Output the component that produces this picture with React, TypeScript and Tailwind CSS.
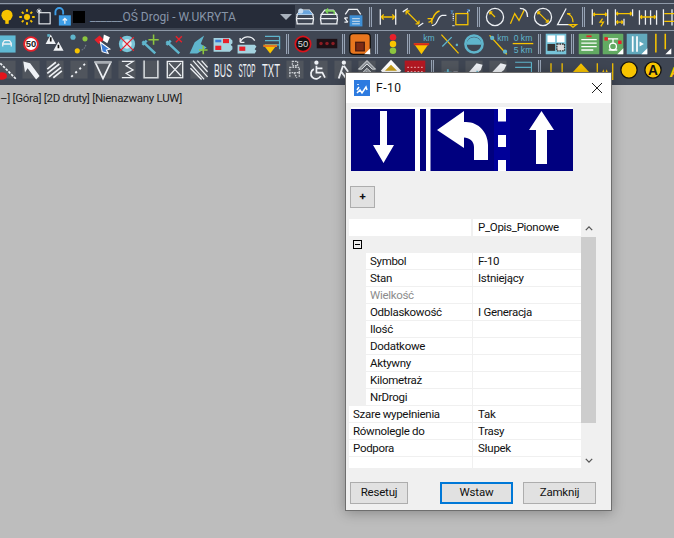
import type { ReactNode } from "react";

const Y = "#f8c400";
const W = "#eef1f5";
const T = "#5fb5cc";
const R = "#e8202a";
const G = "#8cc63f";

const Ico = ({ children, tile }: { children: ReactNode; tile?: boolean }) => (
  <svg viewBox="-2 -2 28 28" width="24" height="24" fill="none" strokeWidth="1.5" className="shrink-0">
    {tile && <rect x="2" y="1" width="20" height="21" fill="#50555d" />}
    {children}
  </svg>
);

const Sep = ({ className = "w-2" }: { className?: string }) => (
  <div className={`flex h-full shrink-0 items-center justify-center ${className}`}>
    <div className="h-[20px] w-[3px] border-x border-[#97a3b5] bg-[#4b5361]" />
  </div>
);

const Layers = ({ children }: { children?: ReactNode }) => (
  <Ico>
    <path d="M3 9 7 4h10l4 5zM2 14h20M3 9l-1 5M21 9l1 5M2 20h20M2 14l1 6M22 14l-1 6" stroke={W} />
    {children}
  </Ico>
);

const DimH = ({ children }: { children?: ReactNode }) => (
  <Ico>
    <path d="M3 3v18M21 3v18" stroke={W} />
    {children}
  </Ico>
);

const Card = ({ children }: { children?: ReactNode }) => (
  <Ico>
    <path d="M1 5h19l3 3v3l-2 2 2 2v3l-3 3H1z" fill="#a5d3e0" />
    {children}
  </Ico>
);

const GlyphWord = ({ t, sx }: { t: string; sx: number }) => (
  <svg viewBox="0 0 24 24" width="24" height="24" className="shrink-0">
    <text
      transform={`translate(12 19) scale(${sx} 1)`}
      textAnchor="middle"
      fill={W}
      fontSize="19"
      fontFamily="Liberation Sans, sans-serif"
    >
      {t}
    </text>
  </svg>
);

const row1Left = (
  <>
    <div className="-ml-[5px] flex w-[20px] shrink-0">
      <Ico>
        <circle cx="12" cy="10" r="6.500" fill={Y} />
        <rect x="10" y="15" width="4" height="5" fill={Y} />
      </Ico>
    </div>
    <div className="w-[18px] shrink-0">
      <Ico>
        <circle cx="12" cy="12" r="3.500" fill={Y} />
        <path d="M12 3v3M12 18v3M3 12h3M18 12h3M6 6l2 2M16 16l2 2M18 6l-2 2M8 16l-2 2" stroke={Y} strokeWidth="2.200" />
      </Ico>
    </div>
    <div className="w-[19px] shrink-0">
      <Ico>
        <rect x="5" y="7" width="13" height="13" stroke={W} strokeWidth="1.300" />
        <path d="M3 3l4 4M7 3 3 7M5 2v6M2 5h6" stroke={W} strokeWidth="1" />
      </Ico>
    </div>
    <div className="w-[18px] shrink-0">
      <Ico>
        <path d="M2 10V6a4.500 4.500 0 0 1 9 0v3" stroke="#3d9de6" strokeWidth="2.200" />
        <rect x="6" y="10" width="14" height="12" fill="#3d9de6" />
        <path d="M13 20v-6M10.500 16l2.500-2.500 2.500 2.500" stroke={W} strokeWidth="1.500" />
      </Ico>
    </div>
    <div className="ml-[3px] h-[12px] w-[12px] shrink-0 bg-black" />
  </>
);

const Row1 = () => (
  <div className="flex h-[26px] items-center pb-px">
    <div className="flex h-[23px] w-[295px] shrink-0 items-center bg-[#262c39]">
      {row1Left}
      <span className="ml-[5px] flex-1 text-[12px] leading-none text-[#8695a8]">______OŚ Drogi - W.UKRYTA</span>
      <div className="mr-[3px] h-0 w-0 border-x-[6px] border-t-[6px] border-x-transparent border-t-[#a9b2bd]" />
    </div>
    <div className="ml-[-2px] flex items-center">
      <Layers>
        <path d="M3 9 7 4h10l4 5z" fill="#6aa5dd" />
        <circle cx="7" cy="5" r="3" fill="#c8dcf0" />
      </Layers>
      <Layers>
        <path d="M8 5h10v4M8 5l3-3M8 5l3 3" stroke="#7ed957" strokeWidth="1.500" />
      </Layers>
      <Ico>
        <path d="M3 9 7 3h10l4 6M2 13h4M2 18h4M2 13l4 5" stroke={W} />
        <rect x="8" y="10" width="15" height="13" fill="#3e8fd6" />
        <path d="M11 14h9M11 17h9M11 20h9" stroke={W} strokeWidth="1" />
      </Ico>
      <Sep className="w-[11px]" />
      <DimH>
        <path d="M4 12h16M4 12l3-3M4 12l3 3M20 12l-3-3M20 12l-3 3" stroke={Y} />
      </DimH>
      <div className="ml-px">
        <Ico>
          <path d="M0 6l6-4M18 23l6-4" stroke={W} />
          <path d="M4 5l15 15M4 5h4M4 5v4M19 20h-4M19 20v-4" stroke={Y} />
        </Ico>
      </div>
      <Ico>
        <path d="M2 18c7 0 4-11 13-13" stroke={Y} strokeWidth="1.600" />
        <path d="M6 22c8 0 5-10 12-12h5" stroke={W} />
        <path d="M1 14h5v6" stroke={Y} />
      </Ico>
      <Ico>
        <rect x="6" y="8" width="14" height="13" stroke={Y} />
        <path d="M3 8v8M2 22h3M22 4l-3 3" stroke={W} strokeDasharray="1.500 1" />
        <text x="0" y="7" fontSize="7" fill="#5aa7e0">y</text>
        <text x="19" y="6" fontSize="7" fill="#5aa7e0">x</text>
      </Ico>
      <Sep className="w-[10px]" />
      <Ico>
        <circle cx="12" cy="12" r="10" stroke={W} />
        <path d="M12 12 6 6M6 6h3M6 6v3" stroke={Y} />
      </Ico>
      <Ico>
        <path d="M2 20 7 8l5 8 6-12" stroke={Y} />
        <path d="M13 2c6 0 9 4 9 10" stroke={W} />
      </Ico>
      <Ico>
        <circle cx="12" cy="12" r="10" stroke={W} />
        <path d="M6 6l12 12M6 6h3M6 6v3M18 18h-3M18 18v-3" stroke={Y} />
      </Ico>
      <Ico>
        <path d="M11 2 1 21h15" stroke={W} />
        <path d="M12 8c5 1 7 6 7 10M15 21h8l-4 3zM12 8h4" stroke={Y} />
      </Ico>
      <Sep className="w-[9px]" />
      <DimH>
        <path d="M4 9h16M4 9l2-2M4 9l2 2M20 9l-2-2M20 9l-2 2M15 14l-3 4h4l-3 5" stroke={Y} />
      </DimH>
      <Ico>
        <path d="M2 3v19M22 3v8M12 14v8" stroke={W} />
        <path d="M3 8h18M3 8l2-2M21 8l-2-2M3 8l2 2M21 8l-2 2M3 18h8M3 18l2-2M3 18l2 2M11 18l-2-2M11 18l-2 2" stroke={Y} />
      </Ico>
      <Ico>
        <path d="M2 4v17M9 4v17M15 4v17M22 4v17" stroke={W} />
        <path d="M3 12h18M3 12l2-2M3 12l2 2M21 12l-2-2M21 12l-2 2" stroke={Y} />
      </Ico>
      <Ico>
        <path d="M2 3v19M12 3v19" stroke={W} />
        <path d="M3 8h18M3 17h18" stroke={Y} />
      </Ico>
    </div>
  </div>
);

const Row2 = () => (
  <div className="-ml-[5px] flex h-[26px] items-center pb-px">
    <Ico>
      <rect x="2" y="2" width="20" height="20" fill="#5fb9d4" />
      <path d="M7 15v-4l2-3h6l2 3v4M7 12h10" stroke={W} />
    </Ico>
    <Ico>
      <circle cx="12" cy="12" r="8" fill="#fff" stroke={R} strokeWidth="2.200" />
      <text x="12" y="16" textAnchor="middle" fontSize="11" fontWeight="700" fill="#222" fontFamily="Liberation Sans, sans-serif">50</text>
    </Ico>
    <Ico>
      <path d="M7 1l6 11H1zM16 9l6 11H10z" fill={W} />
      <path d="M7 4v5M16 13v4" stroke="#111" strokeWidth="2" />
      <path d="M3 2h3" stroke={T} strokeWidth="3" />
    </Ico>
    <Ico>
      <circle cx="5" cy="4" r="3" fill={T} />
      <circle cx="19" cy="6" r="3" fill={G} />
      <circle cx="10" cy="20" r="3" fill={Y} />
      <path d="M15 19c3-1 5-4 5-7" stroke="#6b7480" strokeDasharray="2 1" />
    </Ico>
    <Ico>
      <path d="M2 7l6-5 5 5-6 5z" fill={R} />
      <path d="M13 1l7 3-3 7-5-3z" fill="#fff" />
      <path d="M9 10l11 8-4 1 2 4-7-2z" fill="#3a7bd5" stroke="#fff" strokeWidth="1.200" />
    </Ico>
    <Ico>
      <circle cx="12" cy="12" r="9.500" fill="#79c5d8" />
      <circle cx="12" cy="12" r="5.500" fill="#d7edf3" />
      <path d="M4 4l16 16M20 4 4 20" stroke={R} strokeWidth="1.500" />
    </Ico>
    <Ico>
      <path d="M2 9l15 14M2 13l5-5" stroke={T} strokeWidth="3" />
      <path d="M15 1v12M9 7h12" stroke={G} strokeWidth="1.800" />
    </Ico>
    <Ico>
      <path d="M2 9l15 14M2 13l5-5" stroke={T} strokeWidth="3" />
      <path d="M13 3l7 7M20 3l-7 7" stroke={R} strokeWidth="1.600" />
    </Ico>
    <Ico>
      <path d="M1 23 7 10l11-8-4 10 7 4-11 7z" fill={T} />
      <path d="M17 14v10M12 19h10" stroke={G} strokeWidth="1.800" />
    </Ico>
    <Card>
      <rect x="3" y="7" width="7" height="3" fill="#3a7bd5" />
      <rect x="12" y="6" width="7" height="5" fill={R} />
      <rect x="3" y="14" width="7" height="5" fill={R} />
    </Card>
    <Ico>
      <path d="M1 13h20l2 2-2 3 2 2-2 3H1z" fill="#a5d3e0" />
      <path d="M4 10c3-8 13-8 17-2M4 10V5M4 10h5" stroke={W} />
      <rect x="3" y="15" width="7" height="5" fill={R} />
    </Ico>
    <Ico>
      <path d="M5 3h17M5 8h17M5 13h17M22 3v15" stroke={T} />
      <path d="M3 13h16l-8 10z" fill={Y} />
      <path d="M3 13h16v2.500H3z" fill="#e57a1f" />
    </Ico>
    <Sep className="w-[8px]" />
    <Ico>
      <circle cx="12" cy="12" r="9" fill="#111" stroke="#d8141c" strokeWidth="2" />
      <text x="12" y="16" textAnchor="middle" fontSize="11" fill="#ddd" fontFamily="Liberation Sans, sans-serif">50</text>
    </Ico>
    <Ico>
      <rect x="0" y="6" width="24" height="11" fill="#1d1015" />
      <circle cx="5" cy="11.500" r="2" fill="#8a1d24" />
      <circle cx="12" cy="11.500" r="2" fill="#8a1d24" />
      <circle cx="19" cy="11.500" r="2" fill="#8a1d24" />
    </Ico>
    <Sep className="w-[9px]" />
    <Ico>
      <rect x="0" y="0" width="24" height="24" rx="4" fill="#e8761e" stroke="#111" />
      <rect x="7" y="10" width="10" height="10" fill="#7d2b14" stroke="#4a1a10" />
      <path d="M24 17v7h-7z" fill="#fff" />
    </Ico>
    <Sep className="w-[9px]" />
    <Ico>
      <circle cx="12" cy="4" r="3.800" fill={R} />
      <circle cx="12" cy="12" r="3.800" fill={Y} />
      <circle cx="12" cy="20" r="3.800" fill={G} />
    </Ico>
    <Sep className="w-[7px]" />
    <Ico>
      <path d="M0 11h18l-9 13z" fill={Y} />
      <path d="M0 11h18v2.500H0z" fill="#d5281c" />
      <text x="11" y="8" fontSize="10" fill={T} fontFamily="Liberation Sans, sans-serif">km</text>
    </Ico>
    <div className="ml-[2px]">
      <Ico>
        <path d="M2 1l20 22" stroke={Y} />
        <path d="M3 15 14 4M19 12l2 2M21 12l-2 2" stroke={T} />
      </Ico>
    </div>
    <Ico>
      <circle cx="12" cy="12" r="10" stroke={T} strokeWidth="3" />
      <path d="M3 13a9 9 0 0 1 18 0z" fill={T} />
    </Ico>
    <div className="ml-px">
      <Ico>
        <path d="M1 2l20 22" stroke={Y} />
        <circle cx="4" cy="5" r="2.500" fill={T} />
        <circle cx="19" cy="21" r="2.500" fill={T} />
        <text x="10" y="9" fontSize="10" fill={T} fontFamily="Liberation Sans, sans-serif">km</text>
      </Ico>
    </div>
    <Ico>
      <text x="12" y="8" textAnchor="middle" fontSize="10" fill={T} fontFamily="Liberation Sans, sans-serif">0 km</text>
      <path d="M0 11.500h24" stroke={Y} />
      <text x="12" y="22" textAnchor="middle" fontSize="10" fill={T} fontFamily="Liberation Sans, sans-serif">5 km</text>
    </Ico>
    <Sep className="w-[9px]" />
    <Ico>
      <rect x="0" y="0" width="24" height="24" fill="#77c3d8" />
      <rect x="2" y="2" width="9" height="8" fill="#fff" />
      <rect x="13" y="2" width="9" height="8" fill="#fff" />
      <rect x="2" y="12" width="9" height="8" fill="#333" />
      <path d="M13 12h9v8h-9z" fill="#ddd" stroke="#333" strokeDasharray="2 1" />
    </Ico>
    <Sep className="w-[9px]" />
    <Ico>
      <rect x="0" y="0" width="24" height="24" rx="1" fill="#62aa62" />
      <path d="M3 7h18M3 11h18M3 15h18M3 19h14" stroke="#fff" />
      <path d="M9 3h6" stroke={R} strokeWidth="2" />
    </Ico>
    <Ico>
      <rect x="0" y="0" width="24" height="24" rx="1" fill="#62aa62" />
      <path d="M6 6h12M12 6v6M7 19h10" stroke="#fff" />
      <circle cx="12" cy="15" r="4" stroke="#fff" />
      <rect x="2" y="4" width="4" height="4" fill={R} />
      <rect x="18" y="8" width="4" height="4" fill={R} />
      <path d="M24 17v7h-7z" fill="#fff" />
    </Ico>
    <Ico>
      <rect x="0" y="0" width="24" height="24" fill="#62a9bd" />
      <path d="M7 3v18M12 3v18" stroke="#fff" strokeWidth="2" />
      <path d="M15 9l5 3-5 3z" fill="#fff" />
      <path d="M24 17v7h-7z" fill="#fff" />
    </Ico>
    <Ico>
      <path d="M6 0v22M17 0v18" stroke={Y} strokeWidth="1.800" />
      <path d="M24 17v7h-7z" fill="#fff" />
    </Ico>
  </div>
);

const Row3 = () => (
  <div className="-ml-[5px] flex h-[27px] items-center pb-[3px]">
    <Ico tile>
      <path d="M1 1l22 22" stroke={W} strokeWidth="2" strokeDasharray="3 1.500" />
      <ellipse cx="6" cy="19" rx="6" ry="4.500" fill="#e4141c" />
    </Ico>
    <Ico tile>
      <path d="M3 2l8 2 11 15-4 4-10-13-3 5z" fill={W} />
    </Ico>
    <Ico tile>
      <path d="M3 11l10-8M3 16l14-11M5 20l14-11M10 21l10-8" stroke={W} strokeWidth="2" />
    </Ico>
    <Ico tile>
      <path d="M3 20 21 3" stroke={W} strokeWidth="2.200" strokeDasharray="2.500 4" />
    </Ico>
    <Ico tile>
      <path d="M3 3h18l-9 19z" stroke={W} strokeWidth="2" />
      <path d="M3 3h18" stroke="#a8adb3" strokeWidth="3" />
    </Ico>
    <Ico tile>
      <path d="M6 2h13l-8 5 8 5-8 4 8 5H6" stroke={W} strokeWidth="1.500" />
    </Ico>
    <Ico tile>
      <path d="M4 1v20h16V1" stroke="#d4d8dc" strokeWidth="1.800" />
    </Ico>
    <Ico tile>
      <rect x="3" y="2" width="18" height="19" stroke={W} />
      <path d="M5 4l14 15M19 4 5 19" stroke={W} />
    </Ico>
    <Ico tile>
      <path d="M2 5l16 18M2 10l13 13M5 1l17 19M10 1l12 13M15 1l7 8" stroke={W} strokeWidth="1.500" />
    </Ico>
    <GlyphWord t="BUS" sx={0.46} />
    <GlyphWord t="STOP" sx={0.33} />
    <GlyphWord t="TXT" sx={0.5} />
    <Ico tile>
      <path d="M9 2h6v5H9zM6 9h11v6H6zM6 15v6M17 15v6M11 15l3 6" stroke="#c9cdd2" strokeWidth="1.600" strokeDasharray="2 1" />
    </Ico>
    <Ico tile>
      <circle cx="9" cy="3.500" r="2.500" fill={W} />
      <path d="M9 7v8h7l3 6M9 10h7" stroke={W} strokeWidth="2" />
      <path d="M6 11a6 6 0 1 0 8 8" stroke={W} strokeWidth="2" />
    </Ico>
    <Ico tile>
      <circle cx="13" cy="3.500" r="2.500" fill={W} />
      <path d="M12 7 7 22M13 7l5 7M10 14l6 8" stroke={W} strokeWidth="2.200" />
    </Ico>
    <Ico tile>
      <path d="M12 1 2 11h4l6-6 6 6h4zM12 10 2 20h4l6-6 6 6h4z" stroke={W} strokeWidth="1" fill="#8f949a" />
    </Ico>
    <Ico>
      <path d="M12 0 0 13l12 10 12-10z" fill="#fff" />
      <path d="M12 6l-7 7h14z" fill="#c9a018" />
    </Ico>
    <Ico>
      <rect x="0" y="1" width="24" height="22" fill="#b41822" />
      <path d="M3 9h18M3 14h18" stroke="#e9a0a4" strokeDasharray="2 2" />
    </Ico>
    <Sep className="w-[11px]" />
    <Ico tile>
      <path d="M5 15h9M9.500 11v8" stroke={T} strokeWidth="2.200" />
      <path d="M16 15h5" stroke="#ccd" strokeWidth="2.200" />
    </Ico>
    <Ico tile>
      <path d="M3 18 15 4l7 2-2 6-10 8z" fill={W} />
      <path d="M15 13l3 3" stroke={T} />
    </Ico>
    <Ico tile>
      <path d="M3 17 15 4l7 2-3 6-9 7z" fill={W} />
      <path d="M14 17h7" stroke={T} strokeWidth="2" />
    </Ico>
    <Ico>
      <path d="M4 3h19M4 9h19M4 15h19M23 3v12" stroke={T} strokeWidth="1.300" />
      <path d="M1 21l5-5" stroke={W} strokeWidth="2" />
    </Ico>
    <Sep className="w-[11px]" />
    <Ico>
      <path d="M5 4v19M18 4v19" stroke={Y} strokeWidth="1.500" />
    </Ico>
    <Ico>
      <path d="M12 4 1 16h22z" fill={Y} />
      <rect x="7" y="16" width="10" height="6" fill={Y} />
    </Ico>
    <Ico>
      <path d="M3 4v19h18V4" stroke={Y} strokeWidth="1.500" />
      <path d="M6 22l4-11 2 5 2-5 4 11z" fill={Y} />
    </Ico>
    <Ico>
      <circle cx="12" cy="12" r="9.500" fill={Y} stroke="#111" />
    </Ico>
    <Ico>
      <circle cx="12" cy="12" r="9.500" fill={Y} stroke="#111" />
      <text x="12" y="18" textAnchor="middle" fontSize="16" fontWeight="700" fill="#111" fontFamily="Liberation Sans, sans-serif">A</text>
    </Ico>
    <Ico>
      <text x="3" y="20" fontSize="18" fontWeight="700" fill={Y} fontFamily="Liberation Sans, sans-serif">A</text>
    </Ico>
  </div>
);

const Toolbar = () => (
  <div className="h-[85px] overflow-hidden bg-[#3f4653]">
    <div className="h-[3px]" />
    <div className="h-px bg-[#8e99a8]" />
    <Row1 />
    <div className="h-px bg-[#8e99a8]" />
    <Row2 />
    <div className="h-px bg-[#8e99a8]" />
    <Row3 />
  </div>
);

const RoadSign = () => (
  <svg viewBox="0 0 222 62" width="222" height="62" className="block">
    <rect width="222" height="62" fill="#00007f" />
    <rect x="143" width="16" height="62" fill="#000098" />
    <g fill="#fff">
      <path d="M29 2h7v34h7L32.500 54 22 36h7z" />
      <rect x="64" width="5" height="62" />
      <rect x="75" width="4.500" height="62" />
      <path d="M86 21 113 2v11h2c13 0 22 11 22 23v15h-14V38c0-6-5-9.500-10-9.500V39z" />
      <rect x="147" width="8" height="12.500" />
      <rect x="147" y="26" width="8" height="12" />
      <rect x="147" y="51" width="8" height="11" />
      <path d="M190.500 2 203 21h-7v34h-11V21h-7z" />
    </g>
  </svg>
);

const groupRows = [
  { label: "Symbol", value: "F-10" },
  { label: "Stan", value: "Istniejący" },
  { label: "Wielkość", value: "", muted: true },
  { label: "Odblaskowość", value: "I Generacja" },
  { label: "Ilość", value: "" },
  { label: "Dodatkowe", value: "" },
  { label: "Aktywny", value: "" },
  { label: "Kilometraż", value: "" },
  { label: "NrDrogi", value: "" },
];

const topRows = [
  { label: "Szare wypełnienia", value: "Tak" },
  { label: "Równolegle do", value: "Trasy" },
  { label: "Podpora", value: "Słupek" },
  { label: "", value: "" },
];

const PropRow = ({ label, value, muted, indent }: { label: string; value: string; muted?: boolean; indent?: boolean }) => (
  <div className="flex h-[17px] shrink-0 border-b border-[#f0f0f0]">
    <div className={`flex w-[124px] shrink-0 ${indent ? "pl-[17px]" : ""}`}>
      <div className={`flex-1 border-r border-[#f0f0f0] bg-white pl-1 leading-[16px] ${muted ? "text-[#8c8c8c]" : ""}`}>{label}</div>
    </div>
    <div className="flex-1 bg-white pl-[5px] leading-[16px]">{value}</div>
  </div>
);

const PropGrid = () => (
  <div className="ml-[3px] mt-[11px] flex h-[249px] w-[247px] text-[11.500px] tracking-[-0.3px] text-[#111]">
    <div className="flex w-[232px] flex-col overflow-hidden">
      <div className="flex h-[17px] shrink-0">
        <div className="w-[124px] border-r-2 border-[#f0f0f0] bg-white" />
        <div className="flex-1 bg-white pl-[5px] leading-[16px]">P_Opis_Pionowe</div>
      </div>
      <div className="flex h-[17px] shrink-0 items-center pl-1">
        <div className="flex h-[9px] w-[9px] items-center justify-center border border-black">
          <div className="h-px w-[5px] bg-black" />
        </div>
      </div>
      {groupRows.map((r) => (
        <PropRow key={r.label} {...r} indent />
      ))}
      {topRows.map((r, i) => (
        <PropRow key={i} {...r} />
      ))}
    </div>
    <div className="flex w-[15px] flex-col items-center">
      <svg viewBox="0 0 10 6" width="8" height="5" className="mb-[6px] mt-[7px] shrink-0">
        <path d="M1 5l4-4 4 4" stroke="#555" strokeWidth="1.600" fill="none" />
      </svg>
      <div className="h-[186px] w-full shrink-0 bg-[#cdcdcd]" />
      <svg viewBox="0 0 10 6" width="8" height="5" className="mt-[35px] shrink-0">
        <path d="M1 1l4 4 4-4" stroke="#555" strokeWidth="1.600" fill="none" />
      </svg>
    </div>
  </div>
);

const Btn = ({ children, className }: { children: ReactNode; className: string }) => (
  <button className={`h-[22px] bg-[#e1e1e1] text-[11.500px] leading-none tracking-[-0.2px] text-[#111] ${className}`}>{children}</button>
);

const Dialog = () => (
  <div className="absolute left-[345px] top-[72px] flex h-[439px] w-[267px] flex-col border border-[#6e6e6e] bg-[#f0f0f0] shadow-[0_2px_12px_rgba(0,0,0,0.28)] [font-family:Roboto,sans-serif]">
    <div className="flex h-[30px] shrink-0 items-center bg-white">
      <svg viewBox="0 0 16 16" width="16" height="16" className="ml-2">
        <rect width="16" height="16" fill="#2d7be0" />
        <path d="M4 4v1M3 10l2-3M3 13l3-3 2 3 4-6 1 3" stroke="#fff" strokeWidth="1.500" fill="none" />
      </svg>
      <span className="ml-[6px] flex-1 text-[12px] tracking-[0.5px] text-[#111]">F-10</span>
      <svg viewBox="0 0 12 12" width="12" height="12" className="mr-[8px]">
        <path d="M1 1l10 10M11 1 1 11" stroke="#222" strokeWidth="1" />
      </svg>
    </div>
    <div className="ml-[5px] mt-[4px] w-[222px] border-t-2 border-white">
      <RoadSign />
    </div>
    <Btn className="ml-[4px] mt-[15px] w-[25px] shrink-0 border border-[#adadad]">
      <span className="font-bold">+</span>
    </Btn>
    <PropGrid />
    <div className="ml-[4px] mt-[14px] flex">
      <Btn className="w-[58px] border border-[#adadad]">Resetuj</Btn>
      <Btn className="ml-[32px] w-[73px] border-2 border-[#0078d7]">Wstaw</Btn>
      <Btn className="ml-[10px] w-[73px] border border-[#adadad]">Zamknij</Btn>
    </div>
  </div>
);

export default function App() {
  return (
    <div className="relative h-[538px] w-[674px] overflow-hidden bg-[#bdbdbd] [font-family:Roboto,sans-serif]">
      <Toolbar />
      <div className="mt-[6px] whitespace-nowrap text-[11.500px] leading-[14px] tracking-[-0.3px] text-[#1c1c1c]">–] [Góra] [2D druty] [Nienazwany LUW]</div>
      <Dialog />
    </div>
  );
}
